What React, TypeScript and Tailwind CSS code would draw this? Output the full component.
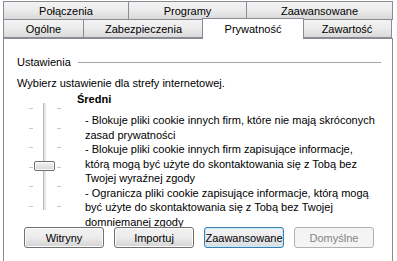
import React from 'react';

const tabBase =
  'flex items-center justify-center -ml-px first:ml-0 border border-[#898c95] bg-gradient-to-b from-[#f3f3f3] via-[#ebebeb] to-[#d9d9d9] text-black';

const descLines = [
  '- Blokuje pliki cookie innych firm, które nie mają skróconych',
  'zasad prywatności',
  '- Blokuje pliki cookie innych firm zapisujące informacje,',
  'którą mogą być użyte do skontaktowania się z Tobą bez',
  'Twojej wyraźnej zgody',
  '- Ogranicza pliki cookie zapisujące informacje, którą mogą',
  'być użyte do skontaktowania się z Tobą bez Twojej',
  'domniemanej zgody',
];

function PrivacySlider() {
  const ticks = [0, 1, 2, 3, 4, 5];
  return (
    <div className="relative w-[34px] h-[107px]">
      {/* track */}
      <div className="absolute left-[15px] top-0 w-[3px] h-[107px] border-l border-[#b8b8b8] bg-[#e6e8e8]" />
      {ticks.map((i) => (
        <React.Fragment key={i}>
          <div className="absolute left-[1px] w-[4px] h-px bg-[#c8c8c8]" style={{ top: 5 + i * 19.6 }} />
          <div className="absolute left-[29px] w-[4px] h-px bg-[#c8c8c8]" style={{ top: 5 + i * 19.6 }} />
        </React.Fragment>
      ))}
      {/* thumb */}
      <div className="absolute left-[6px] top-[58px] w-[21px] h-[10px] rounded-[2px] border border-[#707070] bg-gradient-to-b from-[#f4f4f4] to-[#d6d6d6] shadow-[inset_0_0_0_1px_#fafafa]" />
    </div>
  );
}

function Btn({ label, variant }: { label: string; variant?: 'default' | 'disabled' }) {
  const cls =
    variant === 'default'
      ? 'border-[#3c7fb1] text-black bg-gradient-to-b from-[#f2f2f2] via-[#ebebeb] to-[#d6dde2] shadow-[inset_0_0_0_1px_#c8e9fa]'
      : variant === 'disabled'
      ? 'border-[#adb2b5] text-[#838383] bg-[#f4f4f4]'
      : 'border-[#707070] text-black bg-gradient-to-b from-[#f2f2f2] via-[#ebebeb] to-[#d3d3d3] shadow-[inset_0_0_0_1px_#fcfcfc]';
  return (
    <div className={`flex items-center justify-center w-[80px] h-[21px] rounded-[3px] border ${cls}`}>
      {label}
    </div>
  );
}

export default function App() {
  return (
    <div
      className="w-[397px] h-[261px] bg-white overflow-hidden text-[11px] leading-[14px] text-black"
      style={{ fontFamily: '"Liberation Sans", Arial, sans-serif' }}
    >
      <div className="pl-[3px] pt-[1px]">
        <div className="flex h-[19px]">
          <div className={`${tabBase} w-[126px]`}>Połączenia</div>
          <div className={`${tabBase} w-[119px]`}>Programy</div>
          <div className={`${tabBase} w-[147px]`}>Zaawansowane</div>
        </div>
        <div className="flex h-[19px] -mt-px relative">
          <div className={`${tabBase} w-[81px]`}>Ogólne</div>
          <div className={`${tabBase} w-[121px]`}>Zabezpieczenia</div>
          <div className="relative z-10 -ml-[2px] -mt-[1px] -mr-[1px] w-[102px] h-[21px] flex items-center justify-center border border-b-0 border-[#898c95] bg-white">
            Prywatność
          </div>
          <div className={`${tabBase} w-[90px]`}>Zawartość</div>
        </div>
      </div>

      <div className="ml-[3px] w-[390px] h-[230px] border border-b-0 border-[#898c95] bg-white pl-[13px] pt-[16px]">
        <div className="flex items-center gap-[7px] pr-[11px]">
          <span>Ustawienia</span>
          <div className="flex-1 h-px bg-[#a5a5a5]" />
        </div>

        <div className="mt-[7px]">Wybierz ustawienie dla strefy internetowej.</div>

        <div className="flex mt-[2px]">
          <div className="pt-[11px] pl-[11px] w-[60px]">
            <PrivacySlider />
          </div>
          <div>
            <div className="font-bold">Średni</div>
            <div className="pl-[8px] mt-[7px] leading-[14.5px]">
              {descLines.map((l) => (
                <div key={l} className="whitespace-nowrap">{l}</div>
              ))}
            </div>
          </div>
        </div>

        <div className="flex gap-[10px] pl-[7px] -mt-[2px]">
          <Btn label="Witryny" />
          <Btn label="Importuj" />
          <Btn label="Zaawansowane" variant="default" />
          <Btn label="Domyślne" variant="disabled" />
        </div>
      </div>
    </div>
  );
}
